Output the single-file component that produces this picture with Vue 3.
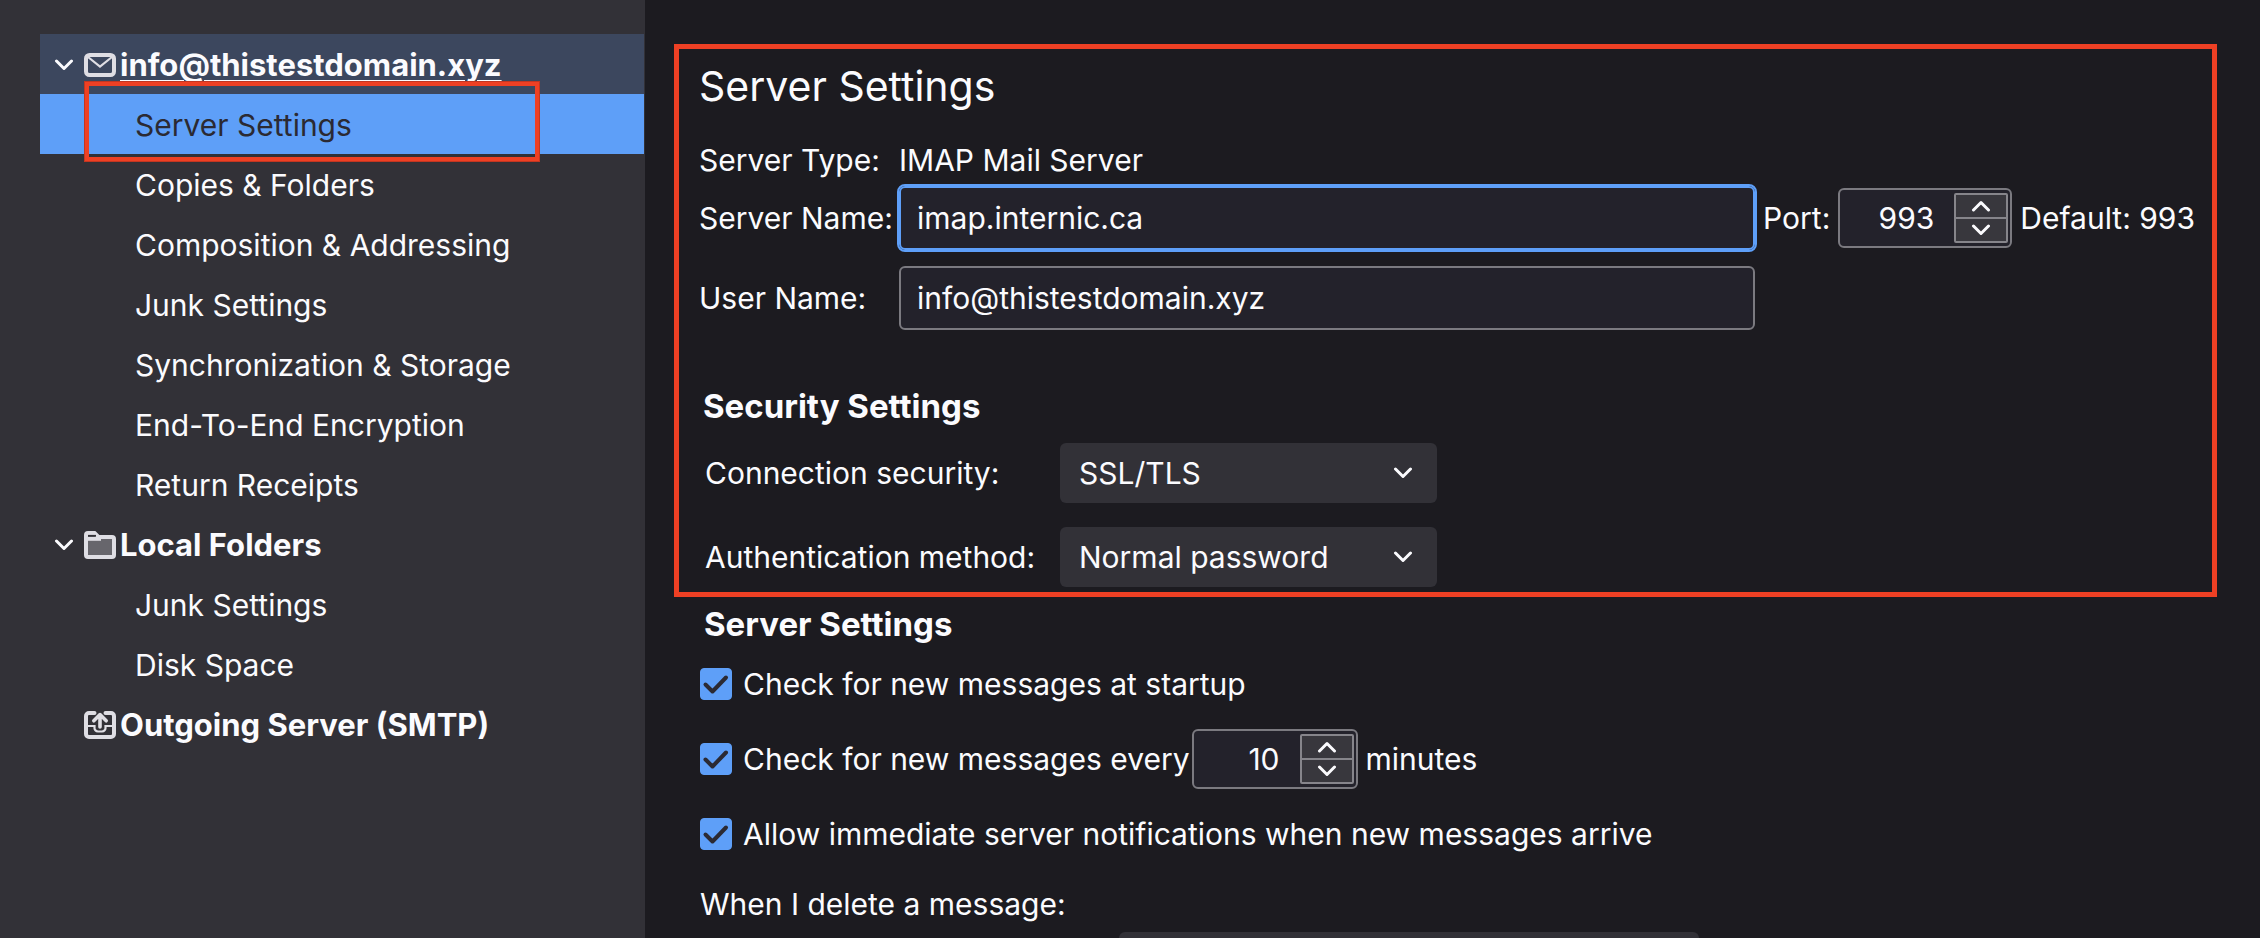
<script setup>
import { ref } from 'vue'

const tree = [
  {
    label: 'info@thistestdomain.xyz', icon: 'mail', open: true, current: true,
    children: [
      'Server Settings', 'Copies & Folders', 'Composition & Addressing', 'Junk Settings',
      'Synchronization & Storage', 'End-To-End Encryption', 'Return Receipts',
    ],
  },
  { label: 'Local Folders', icon: 'folder', open: true, children: ['Junk Settings', 'Disk Space'] },
  { label: 'Outgoing Server (SMTP)', icon: 'outbox', open: false, children: [] },
]

const serverName = ref('imap.internic.ca')
const userName = ref('info@thistestdomain.xyz')
const port = ref(993)
const interval = ref(10)
const checkStartup = ref(true)
const checkEvery = ref(true)
const allowPush = ref(true)
</script>

<template>
  <div class="app">
    <nav class="sidebar" aria-label="Accounts">
      <ul class="tree">
        <li v-for="(account, a) in tree" :key="account.label">
          <a href="#" class="row account" :class="{ current: account.current }">
            <span class="twisty">
              <svg v-if="account.open" width="20" height="12" viewBox="0 0 20 12" class="chevron">
                <path d="M2.500 2 L10 9.500 L17.500 2" />
              </svg>
            </span>
            <svg v-if="account.icon === 'mail'" class="icon" width="32" height="32" viewBox="0 0 32 32">
              <rect x="2" y="6" width="28" height="20" rx="3.500" stroke-width="4" />
              <path d="M4 8 L16 17.500 L28 8" stroke-width="2.200" />
            </svg>
            <svg v-else-if="account.icon === 'folder'" class="icon" width="32" height="32" viewBox="0 0 32 32">
              <path d="M2 8.500 V6 A2 2 0 0 1 4 4 H10.500 L14.500 8 H28 A2 2 0 0 1 30 10 V26 A2 2 0 0 1 28 28 H4 A2 2 0 0 1 2 26 Z" fill="#67666c" stroke-width="4" />
              <path d="M4 9.800 H17" stroke-width="4" />
              <path d="M4 6.800 H12" stroke="#323137" stroke-width="1.800" />
            </svg>
            <svg v-else class="icon" width="32" height="32" viewBox="0 0 32 32">
              <path d="M10.500 4 H5 A3 3 0 0 0 2 7 V25 A3 3 0 0 0 5 28 H27 A3 3 0 0 0 30 25 V7 A3 3 0 0 0 27 4 H21.500" stroke-width="4" stroke-linecap="round" />
              <path d="M4 17 H10.500 V18.500 A3.500 3.500 0 0 0 14 22.500 H18 A3.500 3.500 0 0 0 21.500 18.500 V17 H28" stroke-width="2.200" />
              <path d="M16 18 V6.500 M9.800 11.800 L16 5.600 L22.200 11.800" stroke-width="3.600" stroke-linecap="round" stroke-linejoin="round" />
            </svg>
            <span class="account-name">{{ account.label }}</span>
          </a>
          <ul v-if="account.children.length" class="children">
            <li v-for="(child, c) in account.children" :key="child">
              <a href="#" class="row child" :class="{ selected: a === 0 && c === 0 }">
                {{ child }}
                <span v-if="a === 0 && c === 0" class="marker"></span>
              </a>
            </li>
          </ul>
        </li>
      </ul>
    </nav>

    <main class="content">
      <section class="panel">
        <h1>Server Settings</h1>
        <div class="server-grid">
          <span>Server Type:</span>
          <span class="type-value">IMAP Mail Server</span>

          <label for="server-name">Server Name:</label>
          <input id="server-name" v-model="serverName" class="text-box focused" type="text" />
          <div class="port">
            <label for="port">Port:</label>
            <span class="number">
              <input id="port" v-model="port" type="number" />
              <span class="steps">
                <button type="button" aria-label="Increase port" @click="port++">
                  <svg width="20" height="12" viewBox="0 0 20 12" class="chevron"><path d="M2.500 10 L10 2.500 L17.500 10" /></svg>
                </button>
                <button type="button" aria-label="Decrease port" @click="port--">
                  <svg width="20" height="12" viewBox="0 0 20 12" class="chevron"><path d="M2.500 2 L10 9.500 L17.500 2" /></svg>
                </button>
              </span>
            </span>
            <span>Default: 993</span>
          </div>

          <label class="row-user" for="user-name">User Name:</label>
          <input id="user-name" v-model="userName" class="text-box" type="text" />
        </div>

        <h2>Security Settings</h2>
        <div class="security-grid">
          <label for="connection">Connection security:</label>
          <span class="dropdown">
            <select id="connection"><option>SSL/TLS</option></select>
            <svg width="20" height="12" viewBox="0 0 20 12" class="chevron"><path d="M2.500 2 L10 9.500 L17.500 2" /></svg>
          </span>
          <label for="auth">Authentication method:</label>
          <span class="dropdown">
            <select id="auth"><option>Normal password</option></select>
            <svg width="20" height="12" viewBox="0 0 20 12" class="chevron"><path d="M2.500 2 L10 9.500 L17.500 2" /></svg>
          </span>
        </div>
      </section>

      <section class="options">
        <h2>Server Settings</h2>
        <div class="checks">
          <div class="check-row">
            <span class="tick">
              <input id="startup" v-model="checkStartup" type="checkbox" />
              <svg v-if="checkStartup" width="32" height="32" viewBox="0 0 32 32"><path d="M5.500 16.500 L12.500 23.500 L26 9.500" /></svg>
            </span>
            <label for="startup">Check for new messages at startup</label>
          </div>
          <div class="check-row">
            <span class="tick">
              <input id="every" v-model="checkEvery" type="checkbox" />
              <svg v-if="checkEvery" width="32" height="32" viewBox="0 0 32 32"><path d="M5.500 16.500 L12.500 23.500 L26 9.500" /></svg>
            </span>
            <label for="every">Check for new messages every</label>
            <span class="number interval">
              <input v-model="interval" type="number" aria-label="Minutes between checks" />
              <span class="steps">
                <button type="button" aria-label="Increase minutes" @click="interval++">
                  <svg width="20" height="12" viewBox="0 0 20 12" class="chevron"><path d="M2.500 10 L10 2.500 L17.500 10" /></svg>
                </button>
                <button type="button" aria-label="Decrease minutes" @click="interval--">
                  <svg width="20" height="12" viewBox="0 0 20 12" class="chevron"><path d="M2.500 2 L10 9.500 L17.500 2" /></svg>
                </button>
              </span>
            </span>
            <span>minutes</span>
          </div>
          <div class="check-row">
            <span class="tick">
              <input id="push" v-model="allowPush" type="checkbox" />
              <svg v-if="allowPush" width="32" height="32" viewBox="0 0 32 32"><path d="M5.500 16.500 L12.500 23.500 L26 9.500" /></svg>
            </span>
            <label for="push">Allow immediate server notifications when new messages arrive</label>
          </div>
        </div>
        <label class="delete-label" for="delete-folder">When I delete a message:</label>
        <select id="delete-folder" class="delete-select"></select>
      </section>
    </main>
  </div>
</template>

<style>
body {
  margin: 0;
  background: #1c1b20;
}
</style>

<style scoped>
* {
  box-sizing: border-box;
}

.app {
  display: flex;
  height: 100vh;
  overflow: hidden;
  background: #1c1b20;
  color: #fbfbfe;
  font-family: Inter, "Liberation Sans", sans-serif;
  font-size: 30px;
  line-height: 36px;
  white-space: nowrap;
}

input,
select,
button {
  margin: 0;
  color: inherit;
  font: inherit;
}

.chevron {
  display: block;
  fill: none;
  stroke: #fbfbfe;
  stroke-width: 3;
  stroke-linecap: round;
  stroke-linejoin: round;
}

/* Account tree */
.sidebar {
  flex: 0 0 645px;
  padding: 34px 1px 0 40px;
  background: #323137;
}

.tree,
.children {
  margin: 0;
  padding: 0;
  list-style: none;
}

.row {
  position: relative;
  display: flex;
  align-items: center;
  height: 60px;
  padding-top: 2px;
  color: #fbfbfe;
  text-decoration: none;
}

.account {
  padding-left: 14px;
  font-size: 31px;
  font-weight: 700;
}

.account.current {
  background: #3c475e;
}

.account.current .account-name {
  text-decoration: underline;
  text-decoration-thickness: 2px;
  text-underline-offset: 4px;
}

.twisty {
  width: 30px;
}

.icon {
  flex: none;
  margin-right: 4px;
  fill: none;
  stroke: #dfdee4;
}

.child {
  padding-left: 95px;
}

.child.selected {
  background: #5e9ff8;
  color: #2b2a33;
}

.marker {
  position: absolute;
  top: -13px;
  bottom: -8px;
  left: 44px;
  width: 456px;
  border: 5px solid #ee4024;
  outline: 1px solid rgba(130, 40, 30, 0.4);
  outline-offset: -1px;
  z-index: 1;
}

/* Settings pane */
.content {
  flex: 1;
  min-width: 0;
  padding: 44px 43px 0 29px;
}

.panel {
  padding: 11px 17px 5px 20px;
  border: 5px solid #ee4024;
}

h1 {
  margin: 0 0 30px;
  font-size: 41px;
  font-weight: 400;
  line-height: 52px;
}

h2 {
  margin: 0;
  padding-left: 4px;
  font-size: 33px;
  font-weight: 700;
  line-height: 40px;
}

.server-grid {
  display: grid;
  grid-template-columns: 200px 1fr auto;
  align-items: center;
}

.type-value {
  grid-column: 2 / 4;
}

.text-box {
  width: 100%;
  height: 64px;
  margin: 8px 0;
  padding: 0 16px;
  border: 2px solid #7b7a80;
  border-radius: 6px;
  outline: none;
  background: #23222b;
}

.text-box.focused {
  border-color: #5e9ff8;
  outline: 2px solid #5e9ff8;
}

.row-user {
  grid-column: 1;
}

.port {
  display: flex;
  align-items: center;
  padding-left: 8px;
}

.number {
  display: flex;
  justify-content: space-between;
  width: 174px;
  height: 60px;
  margin: 0 8px;
  padding: 3px 2px 3px 0;
  border: 2px solid #7b7a80;
  border-radius: 6px;
  background: #23222b;
}

.number input {
  flex: 1;
  min-width: 0;
  padding: 0 20px 0 0;
  border: 0;
  outline: none;
  background: transparent;
  text-align: right;
  appearance: textfield;
}

.number input::-webkit-inner-spin-button {
  display: none;
}

.number.interval {
  width: 166px;
  margin-left: 2px;
}

.steps {
  display: flex;
  flex-direction: column;
  width: 54px;
  border: 2px solid #86858b;
  border-radius: 2px;
}

.steps button {
  display: flex;
  flex: 1;
  align-items: center;
  justify-content: center;
  padding: 0;
  border: 0;
  background: #38373d;
}

.steps button + button {
  border-top: 2px solid #86858b;
}

.panel h2 {
  margin: 48px 0 17px;
}

.security-grid {
  display: grid;
  grid-template-columns: 355px 377px;
  row-gap: 24px;
  align-items: center;
  padding-left: 6px;
}

.dropdown {
  display: grid;
  align-items: center;
}

.dropdown > * {
  grid-area: 1 / 1;
}

.dropdown .chevron {
  justify-self: end;
  margin-right: 24px;
  pointer-events: none;
}

select {
  width: 100%;
  height: 60px;
  padding: 0 19px;
  border: 0;
  border-radius: 6px;
  background: #323137;
  appearance: none;
}

.options {
  padding: 7px 0 0 26px;
}

.checks {
  display: grid;
  gap: 15px;
  margin: 10px 0 22px;
}

.check-row {
  display: flex;
  align-items: center;
  height: 60px;
}

.tick {
  display: grid;
  margin-right: 11px;
}

.tick > * {
  grid-area: 1 / 1;
}

.tick input {
  width: 32px;
  height: 32px;
  border: 1px solid #7b7a80;
  border-radius: 4px;
  appearance: none;
}

.tick input:checked {
  border-color: #5e9ff8;
  background: #5e9ff8;
}

.tick svg {
  fill: none;
  stroke: #2b2a33;
  stroke-width: 4;
  stroke-linecap: round;
  stroke-linejoin: round;
  pointer-events: none;
}

.delete-label {
  display: block;
}

.delete-select {
  display: block;
  width: 580px;
  margin: 10px 0 0 419px;
}
</style>
